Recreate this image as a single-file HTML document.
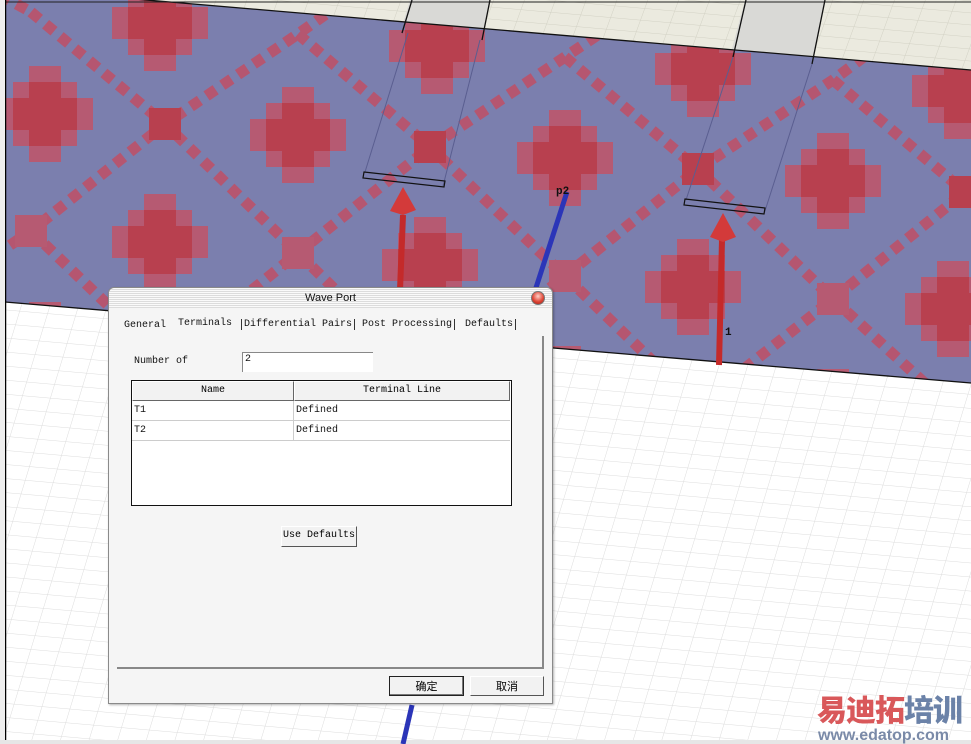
<!DOCTYPE html>
<html><head><meta charset="utf-8"><style>
*{margin:0;padding:0;box-sizing:border-box}
body{width:971px;height:744px;overflow:hidden;background:#fff;position:relative;font-family:"Liberation Mono","Noto Sans CJK SC",monospace}
.abs{position:absolute}
.dlg{left:108px;top:287px;width:445px;height:417px;background:#f5f5f5;border:1px solid #8a8a8a;border-radius:6px 6px 0 0;box-shadow:1px 1px 2px rgba(0,0,0,.3)}
.title{left:0;top:0;width:443px;height:20px;border-radius:6px 6px 0 0;background:repeating-linear-gradient(#fafafa 0 1px,#dcdcdc 1px 2px);font:11px "Liberation Sans",sans-serif;text-align:center;line-height:20px;color:#111}
.t{font-size:10px;color:#111;white-space:nowrap}
.btn{background:#f2f2f2;border:1px solid;border-color:#fff #555 #555 #fff;text-align:center;font-size:10px;line-height:18px;white-space:nowrap}
</style></head><body>
<svg class="abs" style="left:0;top:0" width="971" height="744">
<defs>
<pattern id="g1" width="28" height="14" patternUnits="userSpaceOnUse" patternTransform="rotate(5) skewX(-12)"><path d="M0 0H28M0 0V14" stroke="#dcdcdc" stroke-width="1" fill="none"/></pattern>
<pattern id="g2" width="30" height="12" patternUnits="userSpaceOnUse" patternTransform="rotate(5) skewX(-15)"><path d="M0 0H30M0 0V12" stroke="#d2d1c4" stroke-width="1" fill="none"/></pattern>
<clipPath id="band"><polygon points="5,-12 971,70 971,383 5,302"/></clipPath>
<g id="b">
<path d="M-16-48H16V-32H32V-16H48V16H32V32H16V48H-16V32H-32V16H-48V-16H-32V-32H-16Z" fill="#b65a72"/>
<path d="M-16-32H16V-16H32V16H16V32H-16V16H-32V-16H-16Z" fill="#b8404f"/>
</g>
</defs>
<rect x="0" y="0" width="971" height="744" fill="#fff"/>
<rect x="5" y="0" width="966" height="740" fill="url(#g1)"/>
<polygon points="5,0 971,0 971,70 5,-12" fill="#ebeadf"/>
<polygon points="5,0 971,0 971,70 5,-12" fill="url(#g2)"/>
<polygon points="410,0 490,0 482,40 400,33" fill="#d9d9d6"/>
<polygon points="745,0 825,0 812,63 730,56" fill="#d9d9d6"/>
<g clip-path="url(#band)">
<rect x="0" y="-20" width="971" height="420" fill="#7b7fae"/>
<g fill="none" stroke="#b55670" stroke-width="11" stroke-dasharray="11 8">
<polyline points="-100,320 31,231 165,124 298,34 360,-10"/>
<polyline points="31,470 165,360 298,253 430,147 565,57 650,0"/>
<polyline points="298,490 430,383 565,276 698,169 833,80 940,0"/>
<polyline points="565,510 698,405 833,299 965,192 1000,170"/>
<polyline points="31,12 165,124 298,253 430,383"/>
<polyline points="298,34 430,147 565,276 698,405"/>
<polyline points="565,57 698,169 833,299 965,420"/>
<polyline points="833,80 965,192"/>
<polyline points="31,231 165,360 230,420"/>
<polyline points="-100,-60 31,12"/>
</g>
<use href="#b" x="160" y="23"/><use href="#b" x="437" y="46"/><use href="#b" x="703" y="69"/><use href="#b" x="960" y="91"/>
<use href="#b" x="45" y="114"/><use href="#b" x="298" y="135"/><use href="#b" x="565" y="158"/><use href="#b" x="833" y="181"/>
<use href="#b" x="160" y="242"/><use href="#b" x="430" y="265"/><use href="#b" x="693" y="287"/><use href="#b" x="953" y="309"/>
<use href="#b" x="45" y="350"/><use href="#b" x="298" y="371"/><use href="#b" x="565" y="394"/><use href="#b" x="833" y="417"/>
<rect x="149" y="108" width="32" height="32" fill="#b8404f"/><rect x="414" y="131" width="32" height="32" fill="#b8404f"/>
<rect x="682" y="153" width="32" height="32" fill="#b8404f"/><rect x="949" y="176" width="32" height="32" fill="#b8404f"/>
<rect x="15" y="215" width="32" height="32" fill="#b65a72"/><rect x="282" y="237" width="32" height="32" fill="#b65a72"/>
<rect x="549" y="260" width="32" height="32" fill="#b65a72"/><rect x="817" y="283" width="32" height="32" fill="#b65a72"/>
</g>
<line x1="5" y1="-12" x2="971" y2="70" stroke="#111" stroke-width="1.3"/>
<line x1="5" y1="302" x2="971" y2="383" stroke="#111" stroke-width="1.3"/>
<line x1="0" y1="2" x2="971" y2="2" stroke="#222" stroke-width="1"/>
<line x1="5.5" y1="0" x2="5.5" y2="740" stroke="#000" stroke-width="1.5"/>
<rect x="0" y="0" width="5" height="744" fill="#eee"/>
<rect x="0" y="740" width="971" height="4" fill="#e6e6e6"/>
<g stroke="#111" fill="none" stroke-width="1.3"><path d="M412 0 402 33M490 0 482 40M746 0 733 57M825 0 812 64"/></g>
<g stroke="#5a5e90" fill="none" stroke-width="1"><path d="M408 33 365 172M480 40 443 186M733 57 686 200M812 64 764 214"/></g>
<polygon points="364,172 445,181 444,187 363,178" fill="none" stroke="#111" stroke-width="1.2"/>
<polygon points="685,199 765,208 764,214 684,205" fill="none" stroke="#111" stroke-width="1.2"/>
<path d="M567 192 532 300" stroke="#2b35b8" stroke-width="5"/>
<path d="M412 705 403 744" stroke="#2b35b8" stroke-width="5"/>
<path d="M403 215 400 290" stroke="#c42a2a" stroke-width="6"/>
<polygon points="403,187 390,211 403,215 416,210" fill="#d33a3a"/>
<path d="M722 240 719 365" stroke="#c42a2a" stroke-width="6"/>
<polygon points="723,213 710,237 723,242 736,237" fill="#d33a3a"/>
<text x="556" y="194" font-family="Liberation Mono" font-weight="bold" font-size="11" fill="#111">p2</text>
<text x="725" y="335" font-family="Liberation Mono" font-weight="bold" font-size="11" fill="#111">1</text>
<text x="817" y="721" font-family="'Noto Sans CJK SC',sans-serif" font-weight="900" font-size="30" fill="#d9585a" letter-spacing="-1">易迪拓<tspan fill="#6b82a8">培训</tspan></text>
<text x="818" y="740" font-family="'Liberation Sans',sans-serif" font-weight="bold" font-size="16" fill="#7a8aa8">www.edatop.com</text>
</svg>

<div class="abs dlg">
<div class="abs title">Wave Port</div>
<div class="abs" style="left:422px;top:3px;width:14px;height:14px;border-radius:50%;background:radial-gradient(circle at 50% 35%,#ffd0c8,#e04838 55%,#a01810);border:1px solid #777"></div>
<div class="abs t" style="left:15px;top:32px">General</div>
<div class="abs t" style="left:69px;top:30px">Terminals</div>
<div class="abs t" style="left:132px;top:31px;border-left:1px solid #333;border-right:1px solid #333;padding:0 2px">Differential Pairs</div>
<div class="abs t" style="left:251px;top:31px;border-right:1px solid #333;padding:0 2px">Post Processing</div>
<div class="abs t" style="left:354px;top:31px;border-right:1px solid #333;padding:0 2px">Defaults</div>
<div class="abs" style="left:8px;top:48px;width:427px;height:333px;border-right:2px solid #888;border-bottom:2px solid #888"></div>
<div class="abs t" style="left:25px;top:68px">Number of</div>
<div class="abs t" style="left:133px;top:64px;width:131px;height:20px;background:#fff;border-top:1px solid #888;border-left:1px solid #888;padding:1px 2px">2</div>
<div class="abs" style="left:22px;top:92px;width:381px;height:126px;background:#fff;border:1px solid #111">
 <div class="abs btn" style="left:0;top:0;width:162px;height:20px;border-color:#fff #666 #666 #fff">Name</div>
 <div class="abs btn" style="left:162px;top:0;width:216px;height:20px;border-color:#fff #666 #666 #fff">Terminal Line</div>
 <div class="abs t" style="left:0;top:20px;width:378px;height:20px;border-bottom:1px solid #ccc;line-height:19px;padding-left:2px">T1<span style="position:absolute;left:161px;border-left:1px solid #ccc;padding-left:2px;height:20px">Defined</span></div>
 <div class="abs t" style="left:0;top:40px;width:378px;height:20px;border-bottom:1px solid #ccc;line-height:19px;padding-left:2px">T2<span style="position:absolute;left:161px;border-left:1px solid #ccc;padding-left:2px;height:20px">Defined</span></div>
</div>
<div class="abs btn" style="left:172px;top:238px;width:76px;height:21px">Use Defaults</div>
<div class="abs btn" style="left:280px;top:388px;width:75px;height:20px;border:1px solid #222;box-shadow:inset -1px -1px #777;font-family:'Noto Sans CJK SC',sans-serif;font-size:11px">确定</div>
<div class="abs btn" style="left:361px;top:388px;width:74px;height:20px;font-family:'Noto Sans CJK SC',sans-serif;font-size:11px">取消</div>
</div>
</body></html>
